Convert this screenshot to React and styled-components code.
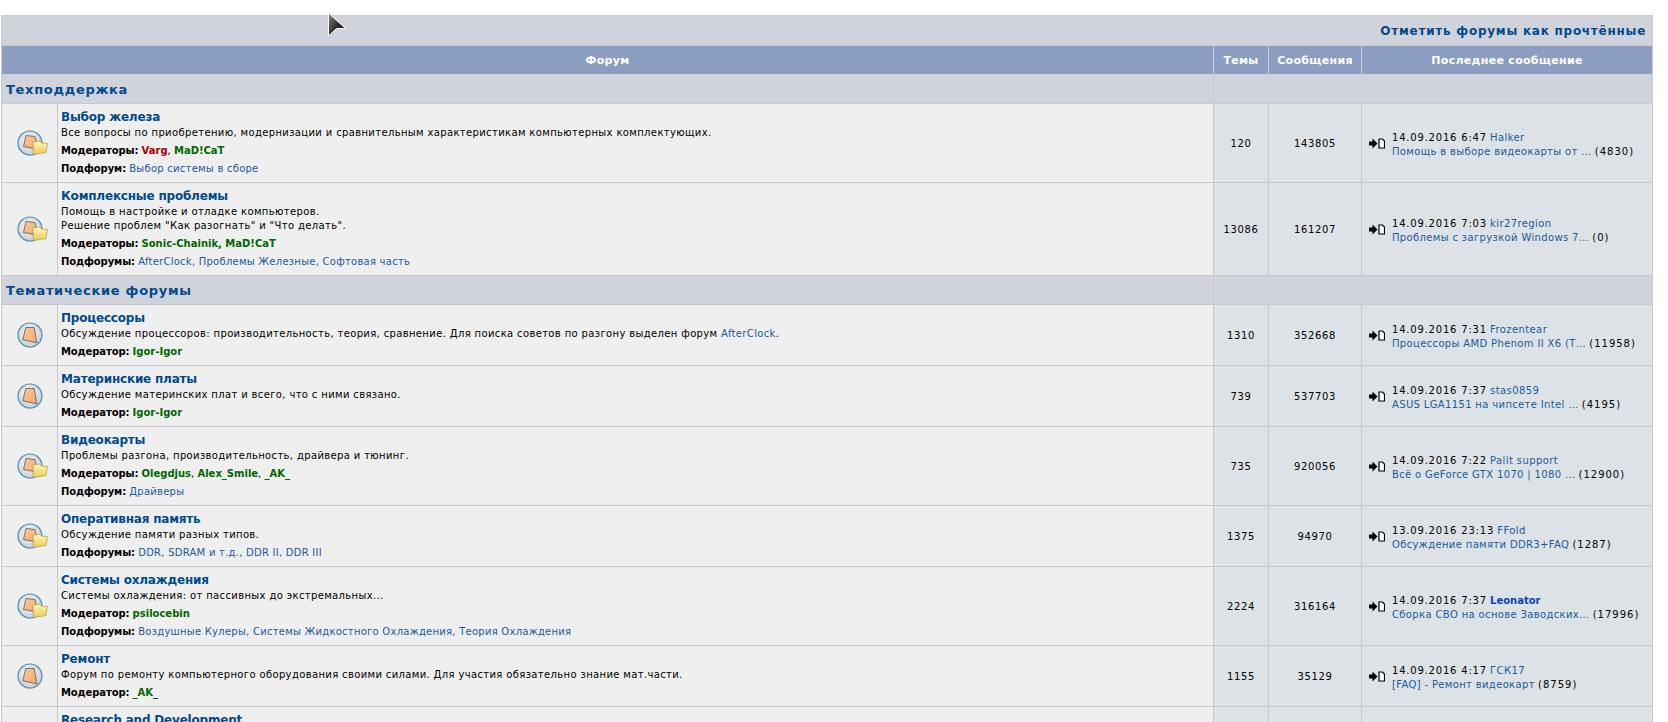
import React from "react";
import styled, { createGlobalStyle } from "styled-components";

const Global = createGlobalStyle`
  html, body { margin: 0; padding: 0; background: #fff; overflow: hidden; height: 722px; }
  body { font-family: "DejaVu Sans", Verdana, sans-serif; font-size: 10px; color: #000; }
`;

const Page = styled.div`
  padding: 15px 16px 0 1px;
  height: 707px;
  overflow: hidden;
  position: relative;
`;
const Board = styled.table`
  width: 1651px;
  table-layout: fixed;
  border-collapse: collapse;
`;
const MarkRow = styled.td`
  height: 29px;
  padding: 0 6px 0 0;
  background: #d1d3dc;
  border: 1px solid #c9c9d0;
  text-align: right;
  vertical-align: middle;
`;
const MarkLink = styled.a`
  font-size: 12px;
  font-weight: bold;
  letter-spacing: 0.75px;
  color: #004a8c;
`;
const Head = styled.th`
  height: 28px;
  padding: 0;
  background: #8b9dc0;
  border: 1px solid #d0d0d4;
  color: #fff;
  font-size: 11px;
  font-weight: bold;
  letter-spacing: 0.3px;
  text-align: center;
  vertical-align: middle;
`;
const CatCell = styled.td`
  height: 27px;
  padding: 1px 0 0 4px;
  background: #d1d3dc;
  border: 1px solid #c8c8ce;
  vertical-align: middle;
`;
const CatTitle = styled.span`
  font-size: 13px;
  font-weight: bold;
  letter-spacing: 0.7px;
  color: #004a8c;
`;
const IconCell = styled.td`
  padding: 0;
  background: #efefef;
  border: 1px solid #c8c8c8;
  vertical-align: middle;
  text-align: center;
`;
const ForumCell = styled.td`
  padding: 4px 4px 4px 3px;
  background: #efefef;
  border: 1px solid #c8c8c8;
  vertical-align: top;
`;
const ForumTitle = styled.a`
  display: block;
  font-size: 12px;
  line-height: 18px;
  font-weight: bold;
  letter-spacing: -0.2px;
  color: #004a8c;
`;
const Desc = styled.div`
  line-height: 14px;
  white-space: pre-line;
  margin-bottom: 2px;
  letter-spacing: 0.36px;
`;
const MetaLine = styled.div`
  line-height: 18px;
  white-space: nowrap;
`;
const MetaLabel = styled.b`
  font-weight: bold;
  letter-spacing: -0.1px;
`;
const Plain = styled.a`
  color: #1a5a9c;
  letter-spacing: 0.35px;
`;
const SubLink = styled.a`
  color: #1a5a9c;
  letter-spacing: 0.25px;
`;
const Mod = styled.b`
  font-weight: bold;
  color: ${(p) => p.$color || "#006600"};
`;
const Stat = styled.td`
  padding: 0;
  background: #dde2e6;
  border: 1px solid #c8c8c8;
  text-align: center;
  vertical-align: middle;
  letter-spacing: 0.65px;
`;
const LastCell = styled.td`
  padding: 0 0 0 7px;
  background: #dde2e6;
  border: 1px solid #c8c8c8;
  vertical-align: middle;
`;
const LastWrap = styled.div`
  display: flex;
  align-items: center;
  gap: 7px;
  white-space: nowrap;
`;
const LastText = styled.div`
  line-height: 14px;
  padding-top: 3px;
`;
const PostDate = styled.span`
  letter-spacing: 0.8px;
`;
const Count = styled.span`
  letter-spacing: 1px;
`;
const Author = styled.a`
  color: ${(p) => (p.$bold ? "#0a3fc4" : "#1a5a9c")};
  font-weight: ${(p) => (p.$bold ? "bold" : "normal")};
  letter-spacing: ${(p) => (p.$bold ? "0" : "0.4px")};
`;
const Cursor = styled.svg`
  position: absolute;
  left: 327px;
  top: 12px;
`;
const IconSvg = styled.svg`
  display: block;
  margin: 0 auto;
  position: relative;
  left: 0.5px;
`;
const PostSvg = styled.svg`
  flex: none;
`;

function ForumIcon({ folder }) {
  return (
    <IconSvg width="36" height="36" viewBox="0 0 36 36">
      <defs>
        <radialGradient id="disc" cx="45%" cy="40%" r="65%">
          <stop offset="0" stopColor="#fcfcfc" />
          <stop offset="1" stopColor="#c4cad0" />
        </radialGradient>
        <linearGradient id="sheet" x1="0" y1="0" x2="1" y2="1">
          <stop offset="0" stopColor="#fbcaa0" />
          <stop offset="1" stopColor="#f2a86c" />
        </linearGradient>
        <linearGradient id="fold" x1="0" y1="0" x2="0" y2="1">
          <stop offset="0" stopColor="#fff6b8" />
          <stop offset="1" stopColor="#eccb52" />
        </linearGradient>
      </defs>
      <circle cx="18" cy="18" r="12" fill="url(#disc)" stroke="#4a8fb0" strokeWidth="1.2" />
      {folder ? (
        <>
          <path d="M14 10.5 L23 11.5 L25 20 L25 24 L11.5 21.5 Z" fill="url(#sheet)" stroke="#6b625c" strokeWidth="0.9" />
          <path d="M21 17 L21.5 29.5 L34 27.5 L35.5 18.5 L29.5 18 L28 16 Z" fill="url(#fold)" stroke="#a99a55" strokeWidth="0.7" />
        </>
      ) : (
        <path d="M13.8 10.5 L22.2 10.5 L24.8 25.8 L10.8 22.8 Z" fill="url(#sheet)" stroke="#6b625c" strokeWidth="0.9" />
      )}
    </IconSvg>
  );
}

function PostIcon() {
  return (
    <PostSvg width="16" height="11" viewBox="0 0 16 11">
      <path d="M0 3.5 H3.5 V0.5 L8.5 5.5 L3.5 10.5 V7.5 H0 Z" fill="#000" />
      <path d="M10 1 H13.5 L15.5 3 V10 H10 Z" fill="#fff" stroke="#000" strokeWidth="1.2" />
    </PostSvg>
  );
}

const sections = [
  {
    title: "Техподдержка",
    rows: [
      {
        t: "Выбор железа",
        d: "Все вопросы по приобретению, модернизации и сравнительным характеристикам компьютерных комплектующих.",
        mlabel: "Модераторы:",
        mods: [["Varg", "#aa0000"], ["MaD!CaT"]],
        slabel: "Подфорум:",
        subs: ["Выбор системы в сборе"],
        topics: 120, posts: 143805, date: "14.09.2016 6:47", author: "Halker",
        link: "Помощь в выборе видеокарты от …", count: 4830,
      },
      {
        t: "Комплексные проблемы",
        d: "Помощь в настройке и отладке компьютеров.\nРешение проблем \"Как разогнать\" и \"Что делать\".",
        mlabel: "Модераторы:",
        mods: [["Sonic-Chainik"], ["MaD!CaT"]],
        modComma: true,
        slabel: "Подфорумы:",
        subs: ["AfterClock", "Проблемы Железные", "Софтовая часть"],
        topics: 13086, posts: 161207, date: "14.09.2016 7:03", author: "kir27region",
        link: "Проблемы с загрузкой Windows 7…", count: 0,
      },
    ],
  },
  {
    title: "Тематические форумы",
    rows: [
      {
        t: "Процессоры",
        d: "Обсуждение процессоров: производительность, теория, сравнение. Для поиска советов по разгону выделен форум ",
        dlink: "AfterClock",
        mlabel: "Модератор:",
        mods: [["Igor-Igor"]],
        topics: 1310, posts: 352668, date: "14.09.2016 7:31", author: "Frozentear",
        link: "Процессоры AMD Phenom II X6 (T…", count: 11958,
      },
      {
        t: "Материнские платы",
        d: "Обсуждение материнских плат и всего, что с ними связано.",
        mlabel: "Модератор:",
        mods: [["Igor-Igor"]],
        topics: 739, posts: 537703, date: "14.09.2016 7:37", author: "stas0859",
        link: "ASUS LGA1151 на чипсете Intel …", count: 4195,
      },
      {
        t: "Видеокарты",
        d: "Проблемы разгона, производительность, драйвера и тюнинг.",
        mlabel: "Модераторы:",
        mods: [["Olegdjus"], ["Alex_Smile"], ["_AK_"]],
        slabel: "Подфорум:",
        subs: ["Драйверы"],
        topics: 735, posts: 920056, date: "14.09.2016 7:22", author: "Palit support",
        link: "Всё о GeForce GTX 1070 | 1080 …", count: 12900,
      },
      {
        t: "Оперативная память",
        d: "Обсуждение памяти разных типов.",
        slabel: "Подфорумы:",
        subs: ["DDR", "SDRAM и т.д.", "DDR II", "DDR III"],
        topics: 1375, posts: 94970, date: "13.09.2016 23:13", author: "FFold",
        link: "Обсуждение памяти DDR3+FAQ", count: 1287,
      },
      {
        t: "Системы охлаждения",
        d: "Системы охлаждения: от пассивных до экстремальных...",
        mlabel: "Модератор:",
        mods: [["psilocebin"]],
        slabel: "Подфорумы:",
        subs: ["Воздушные Кулеры", "Системы Жидкостного Охлаждения", "Теория Охлаждения"],
        topics: 2224, posts: 316164, date: "14.09.2016 7:37", author: "Leonator", authorBold: true,
        link: "Сборка СВО на основе Заводских…", count: 17996,
      },
      {
        t: "Ремонт",
        d: "Форум по ремонту компьютерного оборудования своими силами. Для участия обязательно знание мат.части.",
        mlabel: "Модератор:",
        mods: [["_AK_"]],
        topics: 1155, posts: 35129, date: "14.09.2016 4:17", author: "ГСК17",
        link: "[FAQ] - Ремонт видеокарт", count: 8759,
      },
      {
        t: "Research and Development",
        d: "",
        topics: "", posts: "", date: "", author: "", link: "", count: null,
      },
    ],
  },
];

function ForumRow({ r }) {
  const isStub = !r.d;
  return (
    <tr>
      <IconCell>{!isStub && <ForumIcon folder={!!r.subs} />}</IconCell>
      <ForumCell>
        <ForumTitle>{r.t}</ForumTitle>
        <Desc>
          {r.d}
          {r.dlink && (
            <>
              <Plain>{r.dlink}</Plain>.
            </>
          )}
        </Desc>
        {r.mods && (
          <MetaLine>
            <MetaLabel>{r.mlabel}</MetaLabel>{" "}
            {r.mods.map(([name, color], i) => (
              <React.Fragment key={name}>
                {i > 0 && (r.modComma ? <Mod>, </Mod> : ", ")}
                <Mod $color={color}>{name}</Mod>
              </React.Fragment>
            ))}
          </MetaLine>
        )}
        {r.subs && (
          <MetaLine>
            <MetaLabel>{r.slabel}</MetaLabel>{" "}
            {r.subs.map((s, i) => (
              <React.Fragment key={s}>
                {i > 0 && <SubLink>, </SubLink>}
                <SubLink>{s}</SubLink>
              </React.Fragment>
            ))}
          </MetaLine>
        )}
      </ForumCell>
      <Stat>{r.topics}</Stat>
      <Stat>{r.posts}</Stat>
      <LastCell>
        {r.date && (
          <LastWrap>
            <PostIcon />
            <LastText>
              <PostDate>{r.date}</PostDate> <Author $bold={r.authorBold}>{r.author}</Author>
              <br />
              <Plain>{r.link}</Plain> <Count>({r.count})</Count>
            </LastText>
          </LastWrap>
        )}
      </LastCell>
    </tr>
  );
}

export default function App() {
  return (
    <Page>
      <Global />
      <Board>
        <colgroup>
          <col style={{ width: 56 }} />
          <col style={{ width: 1156 }} />
          <col style={{ width: 55 }} />
          <col style={{ width: 93 }} />
          <col style={{ width: 291 }} />
        </colgroup>
        <tbody>
          <tr>
            <MarkRow colSpan={5}>
              <MarkLink>Отметить форумы как прочтённые</MarkLink>
            </MarkRow>
          </tr>
          <tr>
            <Head colSpan={2}>Форум</Head>
            <Head>Темы</Head>
            <Head>Сообщения</Head>
            <Head>Последнее сообщение</Head>
          </tr>
          {sections.map((s) => (
            <React.Fragment key={s.title}>
              <tr>
                <CatCell colSpan={2}>
                  <CatTitle>{s.title}</CatTitle>
                </CatCell>
                <CatCell colSpan={3} />
              </tr>
              {s.rows.map((r) => (
                <ForumRow key={r.t} r={r} />
              ))}
            </React.Fragment>
          ))}
        </tbody>
      </Board>
      <Cursor width="20" height="26" viewBox="0 0 20 26">
        <defs>
          <linearGradient id="cur" x1="0" y1="0" x2="1" y2="1">
            <stop offset="0" stopColor="#8a8a8a" />
            <stop offset="0.6" stopColor="#222" />
            <stop offset="1" stopColor="#111" />
          </linearGradient>
        </defs>
        <path d="M1.5 1 L18.5 16.5 L9.5 16.5 L1.5 24 Z" fill="url(#cur)" stroke="#fff" strokeWidth="1" />
      </Cursor>
    </Page>
  );
}
